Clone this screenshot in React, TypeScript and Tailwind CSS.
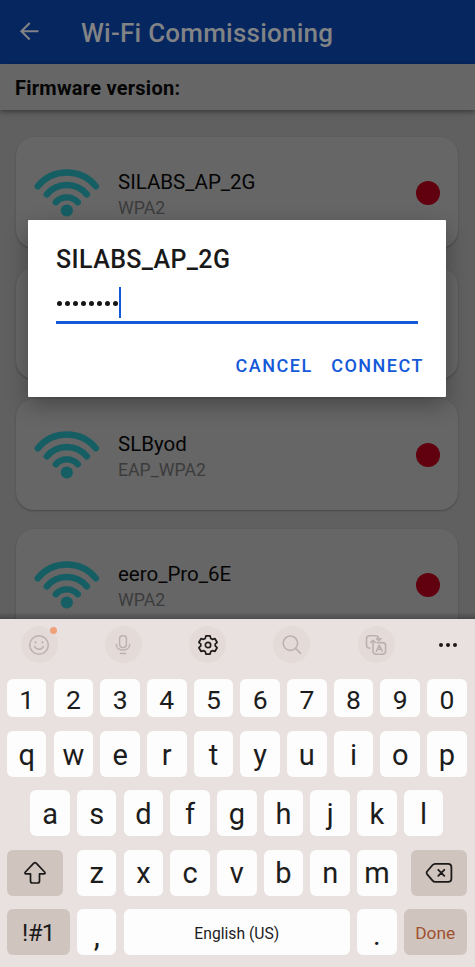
import type { ReactNode } from "react";

const networks = [
  { ssid: "SILABS_AP_2G", security: "WPA2" },
  { ssid: "", security: "" },
  { ssid: "SLByod", security: "EAP_WPA2" },
  { ssid: "eero_Pro_6E", security: "WPA2" },
];

function WifiIcon() {
  return (
    <svg width="66" height="48" viewBox="0 0 66 48" fill="none" stroke="#155e64" strokeWidth="6.4" strokeLinecap="round">
      <path d="M3.8 17.3 A37.5 37.5 0 0 1 61.8 17.3" />
      <path d="M12.8 25.4 A26 26 0 0 1 52.8 25.4" />
      <path d="M21.8 33.2 A15 15 0 0 1 43.8 33.2" />
      <circle cx="32.8" cy="41.5" r="6.1" fill="#155e64" stroke="none" />
    </svg>
  );
}

function NetworkCard({ ssid, security }: { ssid: string; security: string }) {
  return (
    <div className="flex h-[111.3px] shrink-0 items-start rounded-[18px] bg-[#666666] pl-[18px] pr-[18px] shadow-[0_1px_2px_rgba(0,0,0,0.28)]">
      <div className="pt-[32px]"><WifiIcon /></div>
      <div className="flex-1 pl-[18px] pt-[32px]">
        <div className="text-[20.5px] leading-[26px] text-[#050505]">{ssid}</div>
        <div className="text-[17.7px] leading-[26px] text-[#3c3c3c]">{security}</div>
      </div>
      <div className="mt-[44px] size-[24px] rounded-full bg-[#61000f]" />
    </div>
  );
}

function Dialog() {
  return (
    <div className="absolute left-[28px] top-[220px] flex h-[177px] w-[418px] flex-col rounded-[1px] bg-white px-[28px] pt-[25px] shadow-[0_8px_22px_rgba(0,0,0,0.3)]">
      <div className="text-[25px] font-medium leading-[30px] tracking-[0.4px] text-[#191919]">SILABS_AP_2G</div>
      <div className="mt-[12px] flex h-[37px] w-[362px] items-start border-b-[3px] border-[#1459d8]">
        <div className="flex h-[31px] items-center gap-[3px] pl-[1px] pr-[1px] pt-[2px]">
          {Array.from({ length: 8 }, (_, i) => (
            <span key={i} className="size-[5px] rounded-full bg-[#151515]" />
          ))}
        </div>
        <div className="h-[31px] w-[2px] bg-[#1459d8]" />
      </div>
      <div className="-mr-[6px] mt-[28px] flex justify-end gap-[18.5px] text-[18px] font-medium leading-[28px] tracking-[1.5px] text-[#1459d8]">
        <span>CANCEL</span>
        <span>CONNECT</span>
      </div>
    </div>
  );
}

function Key({ children, className = "h-[46px] w-[39.5px] pt-[3px] text-[29px]" }: { children: ReactNode; className?: string }) {
  return <div className={`flex shrink-0 items-center justify-center rounded-[6px] bg-[#fdfdfd] text-[#1c1c1c] ${className}`}>{children}</div>;
}

function ToolButton({ children }: { children: ReactNode }) {
  return <div className="relative flex size-[37px] items-center justify-center rounded-full bg-[#e4dbd9]">{children}</div>;
}

function Toolbar() {
  return (
    <div className="flex h-[51px] items-center gap-[47.3px] pl-[20.5px]">
      <ToolButton>
        <svg width="22" height="22" viewBox="0 0 22 22" fill="none" stroke="#bdb1ae" strokeWidth="1.5" strokeLinecap="round">
          <circle cx="11" cy="11" r="9.3" />
          <path d="M6.7 12.5 C8 16 14 16 15.3 12.5" />
          <path d="M7.6 8.2v.3M14.4 8.2v.3" strokeWidth="2.1" />
        </svg>
        <span className="absolute right-[1px] top-[1px] size-[7px] rounded-full bg-[#efa27a]" />
      </ToolButton>
      <ToolButton>
        <svg width="18" height="22" viewBox="0 0 18 22" fill="none" stroke="#bdb1ae" strokeWidth="1.5" strokeLinecap="round">
          <rect x="5.6" y="1.7" width="6.8" height="11.8" rx="3" />
          <path d="M2.3 10.5c0 7.4 13.4 7.4 13.4 0M6.5 19.6h5" />
        </svg>
      </ToolButton>
      <ToolButton>
        <svg width="22" height="22" viewBox="0 0 22 22" fill="none" stroke="#201d1c" strokeWidth="1.7" strokeLinejoin="round">
          <path d="M8.9 1.9h4.2l.7 2.5 1.6.9 2.6-.6 2.1 3.6-1.9 1.8v1.8l1.9 1.8-2.1 3.6-2.6-.6-1.6.9-.7 2.5H8.9l-.7-2.5-1.6-.9-2.6.6-2.1-3.6 1.9-1.8v-1.8L1.9 8.3 4 4.7l2.6.6 1.6-.9z" />
          <circle cx="11" cy="11" r="2.7" />
        </svg>
      </ToolButton>
      <ToolButton>
        <svg width="22" height="22" viewBox="0 0 22 22" fill="none" stroke="#bdb1ae" strokeWidth="1.6" strokeLinecap="round">
          <circle cx="9.4" cy="9.2" r="7.2" />
          <path d="M14.8 14.6l4.8 4.8" />
        </svg>
      </ToolButton>
      <ToolButton>
        <svg width="22" height="22" viewBox="0 0 22 22" fill="none" stroke="#bdb1ae" strokeWidth="1.6" strokeLinecap="round" strokeLinejoin="round">
          <path d="M4.9 14.3C2.7 14.3 1.5 13.1 1.5 11V5C1.5 2.9 2.7 1.7 4.8 1.7h5.4c2 0 3.4 1 3.5 3.2v1.4M11.5 4.6l2.2 2 2.2-2" />
          <path d="M12 8.6h5.3c2.1 0 3.3 1.2 3.3 3.2v5.2c0 2.1-1.2 3.2-3.3 3.2h-6c-2.1 0-3.3-1.1-3.3-3.2V6.5M5.8 8.4L8 6.4l2.2 2" />
          <path d="M11.5 17.2l2.8-6 2.8 6M12.4 15.3h3.8" />
        </svg>
      </ToolButton>
      <div className="-ml-[3.2px] flex gap-[3px]">
        {[0, 1, 2].map((i) => <span key={i} className="size-[4px] rounded-full bg-[#1c1a19]" />)}
      </div>
    </div>
  );
}

function Keyboard() {
  return (
    <div className="relative h-[348px] shrink-0 overflow-hidden bg-[#e8e1df]">
      <Toolbar />
      <div className="flex flex-col items-center gap-[13.4px] pr-[1.4px] pt-[9px]">
        <div className="flex gap-[7.2px]">
          {[..."1234567890"].map((k) => <Key key={k} className="h-[38.4px] w-[39.5px] pt-[3px] text-[26.5px]">{k}</Key>)}
        </div>
        <div className="flex gap-[7.2px]">
          {[..."qwertyuiop"].map((k) => <Key key={k}>{k}</Key>)}
        </div>
        <div className="flex gap-[7.2px]">
          {[..."asdfghjkl"].map((k) => <Key key={k}>{k}</Key>)}
        </div>
        <div className="flex gap-[7.2px]">
          <Key className="mr-[7.2px] h-[46px] w-[55.6px] bg-[#d0c4be]!">
            <svg width="24" height="24" viewBox="0 0 24 24" fill="none" stroke="#1c1a19" strokeWidth="1.7" strokeLinejoin="round">
              <path d="M10.8 2.1Q12 1 13.2 2.1L21.6 11Q22.8 12.7 20.8 12.9H16.5V20Q16.5 22 14.5 22H9.5Q7.5 22 7.5 20V12.9H3.2Q1.2 12.7 2.4 11Z" />
            </svg>
          </Key>
          {[..."zxcvbnm"].map((k) => <Key key={k}>{k}</Key>)}
          <Key className="ml-[7.2px] h-[46px] w-[55.6px] bg-[#d0c4be]!">
            <svg width="28" height="22" viewBox="0 0 28 22" fill="none" stroke="#1c1a19" strokeWidth="1.8" strokeLinejoin="round" strokeLinecap="round">
              <path d="M10.2 1.8H23Q26.4 1.8 26.4 5.2V16.4Q26.4 19.8 23 19.8H10.2Q8.6 19.8 7.6 18.6L2 12.1Q1.1 10.8 2 9.5L7.6 3Q8.6 1.8 10.2 1.8Z" />
              <path d="M13.3 7.8l6 6M19.3 7.8l-6 6" />
            </svg>
          </Key>
        </div>
        <div className="flex gap-[7.2px]">
          <Key className="h-[46px] w-[62.8px] bg-[#d0c4be]! pt-[2px] text-[24px] tracking-[-0.6px]">!#1</Key>
          <Key className="h-[46px] w-[39.5px] pt-[9px] text-[31px]">,</Key>
          <Key className="h-[46px] w-[226.3px] pt-[3px] text-[15.7px]">English (US)</Key>
          <Key className="h-[46px] w-[39.5px] pt-[7px] text-[29px]">.</Key>
          <Key className="h-[46px] w-[62.8px] bg-[#d0c4be]! pt-[3px] text-[17.4px] text-[#a0522f]!">Done</Key>
        </div>
      </div>
    </div>
  );
}

export default function App() {
  return (
    <div className="relative flex h-[967px] w-full flex-col overflow-hidden bg-[#606060] font-['Roboto',sans-serif]">
      <div className="relative flex h-[619px] flex-col overflow-hidden">
        <header className="flex h-[64px] shrink-0 items-center bg-[#062660] pl-[18px] text-[#818385]">
          <svg width="24" height="24" viewBox="0 0 24 24" fill="none" stroke="#818385" strokeWidth="2.1">
            <path d="M20.5 11.3H3.8M11.7 3L3.4 11.3l8.3 8.3" />
          </svg>
          <h1 className="pl-[39px] pt-[1px] text-[26px] font-medium leading-[32px] tracking-[0.23px]">Wi-Fi Commissioning</h1>
        </header>
        <div className="relative flex h-[46px] shrink-0 items-center bg-[#666666] pl-[15px] pt-[2px] text-[20px] font-bold tracking-[0.25px] text-[#050505] shadow-[0_2px_5px_rgba(0,0,0,0.4)]">
          Firmware version:
        </div>
        <div className="flex flex-col gap-[19.5px] pl-[16px] pr-[17px] pt-[27px]">
          {networks.map((n, i) => <NetworkCard key={i} {...n} />)}
        </div>
        <div className="absolute inset-x-0 bottom-0 h-[7px] bg-linear-to-b from-transparent to-black/25" />
        <Dialog />
      </div>
      <Keyboard />
    </div>
  );
}
